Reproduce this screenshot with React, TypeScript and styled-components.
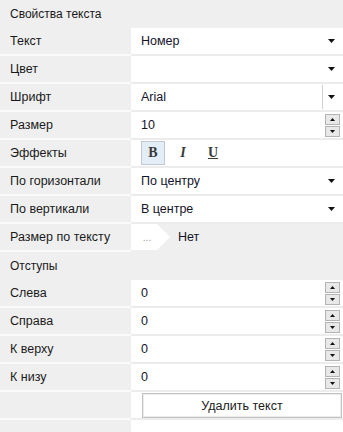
import React from "react";
import styled, { createGlobalStyle } from "styled-components";

const Global = createGlobalStyle`
  html, body { margin: 0; padding: 0; background: #ffffff; }
  body { font-family: "Liberation Sans", Arial, sans-serif; font-size: 12px; color: #1a1a1a; }
`;

const Panel = styled.div`
  width: 343px;
  display: flex;
  flex-direction: column;
  overflow: hidden;
  height: 432px;
`;

const SectionHeader = styled.div`
  height: 28px;
  flex-shrink: 0;
  box-sizing: border-box;
  padding-left: 10px;
  padding-bottom: 1px;
  display: flex;
  align-items: center;
  background: #efefef;
  font-size: 12px;
  color: #1a1a1a;
`;

const Row = styled.div`
  display: grid;
  grid-template-columns: 131px 1fr;
  height: 28px;
  flex-shrink: 0;
`;

const Label = styled.div`
  background: #efefef;
  border-bottom: 2px solid #fafafa;
  padding-left: 10px;
  display: flex;
  align-items: center;
  font-size: 12.5px;
  color: #1a1a1a;
`;

const Value = styled.div<{ $gray?: boolean; $noBorder?: boolean }>`
  position: relative;
  background: ${(p) => (p.$gray ? "#efefef" : "#ffffff")};
  border-bottom: 2px solid ${(p) => (p.$gray ? "#efefef" : p.$noBorder ? "#ffffff" : "#ececec")};
  padding-left: 10px;
  padding-right: 3px;
  display: flex;
  align-items: center;
  font-size: 12.5px;
  color: #14142a;
`;

const ValueText = styled.span`
  flex: 1;
`;

const Caret = styled.svg`
  width: 7px;
  height: 4px;
  margin-right: 5px;
  flex-shrink: 0;
`;

const Divider = styled.div`
  width: 1px;
  height: 24px;
  background: #cfcfcf;
  margin-right: 5px;
`;

const Spinner = styled.div`
  display: flex;
  flex-direction: column;
  gap: 1px;
`;

const SpinBtn = styled.div`
  width: 15px;
  height: 11px;
  box-sizing: border-box;
  border: 1px solid #b4b4b4;
  background: #e8e8e8;
  display: flex;
  align-items: center;
  justify-content: center;
`;

const FxGroup = styled.div`
  display: flex;
  gap: 6px;
`;

const FxBtn = styled.div<{ $active?: boolean }>`
  width: 24px;
  height: 24px;
  box-sizing: border-box;
  border: 1px solid ${(p) => (p.$active ? "#c2c9d1" : "transparent")};
  background: ${(p) => (p.$active ? "#e3edf8" : "transparent")};
  display: flex;
  align-items: center;
  justify-content: center;
  font-family: "Liberation Serif", "Times New Roman", serif;
  font-size: 14px;
  font-weight: bold;
  color: #3a3a3a;
`;

const Tag = styled.div`
  position: relative;
  box-sizing: border-box;
  width: 26px;
  height: 26px;
  margin-left: -10px;
  background: #ffffff;
  display: flex;
  align-items: center;
  justify-content: center;
  font-size: 10px;
  color: #9a9a9a;
  padding-left: 6px;
  margin-right: 21px;
  &::after {
    content: "";
    position: absolute;
    right: -13px;
    top: 0;
    border-left: 13px solid #ffffff;
    border-top: 13px solid transparent;
    border-bottom: 13px solid transparent;
  }
`;

const DeleteButton = styled.button`
  width: 200px;
  height: 25px;
  margin-left: 1px;
  margin-top: 1px;
  box-sizing: border-box;
  border: 1px solid #c2c2c2;
  box-shadow: inset 0 0 0 1px #ececec;
  background: #ffffff;
  font-family: "Liberation Sans", Arial, sans-serif;
  font-size: 12.5px;
  color: #1a1a1a;
  cursor: pointer;
`;

const CaretDown = () => (
  <Caret viewBox="0 0 7 4">
    <path d="M0 0 H7 L3.5 4 Z" fill="#111" />
  </Caret>
);

const SpinArrows = () => (
  <Spinner>
    <SpinBtn>
      <svg width="5" height="3" viewBox="0 0 5 3">
        <path d="M0 3 H5 L2.5 0 Z" fill="#111" />
      </svg>
    </SpinBtn>
    <SpinBtn>
      <svg width="5" height="3" viewBox="0 0 5 3">
        <path d="M0 0 H5 L2.5 3 Z" fill="#111" />
      </svg>
    </SpinBtn>
  </Spinner>
);

const SelectRow = ({ label, value, divider }: { label: string; value: string; divider?: boolean }) => (
  <Row>
    <Label>{label}</Label>
    <Value>
      <ValueText>{value}</ValueText>
      {divider && <Divider />}
      <CaretDown />
    </Value>
  </Row>
);

const NumberRow = ({ label, value }: { label: string; value: string }) => (
  <Row>
    <Label>{label}</Label>
    <Value>
      <ValueText>{value}</ValueText>
      <SpinArrows />
    </Value>
  </Row>
);

export default function App() {
  return (
    <>
      <Global />
      <Panel>
        <SectionHeader>Свойства текста</SectionHeader>
        <SelectRow label="Текст" value="Номер" />
        <SelectRow label="Цвет" value="" />
        <SelectRow label="Шрифт" value="Arial" divider />
        <NumberRow label="Размер" value="10" />
        <Row>
          <Label>Эффекты</Label>
          <Value>
            <FxGroup>
              <FxBtn $active>B</FxBtn>
              <FxBtn style={{ fontStyle: "italic" }}>I</FxBtn>
              <FxBtn style={{ textDecoration: "underline" }}>U</FxBtn>
            </FxGroup>
          </Value>
        </Row>
        <SelectRow label="По горизонтали" value="По центру" />
        <SelectRow label="По вертикали" value="В центре" />
        <Row>
          <Label>Размер по тексту</Label>
          <Value $gray>
            <Tag>...</Tag>
            <ValueText>Нет</ValueText>
          </Value>
        </Row>
        <SectionHeader>Отступы</SectionHeader>
        <NumberRow label="Слева" value="0" />
        <NumberRow label="Справа" value="0" />
        <NumberRow label="К верху" value="0" />
        <NumberRow label="К низу" value="0" />
        <Row>
          <Label />
          <Value>
            <DeleteButton>Удалить текст</DeleteButton>
          </Value>
        </Row>
        <Row>
          <Label />
          <Value $noBorder />
        </Row>
      </Panel>
    </>
  );
}
